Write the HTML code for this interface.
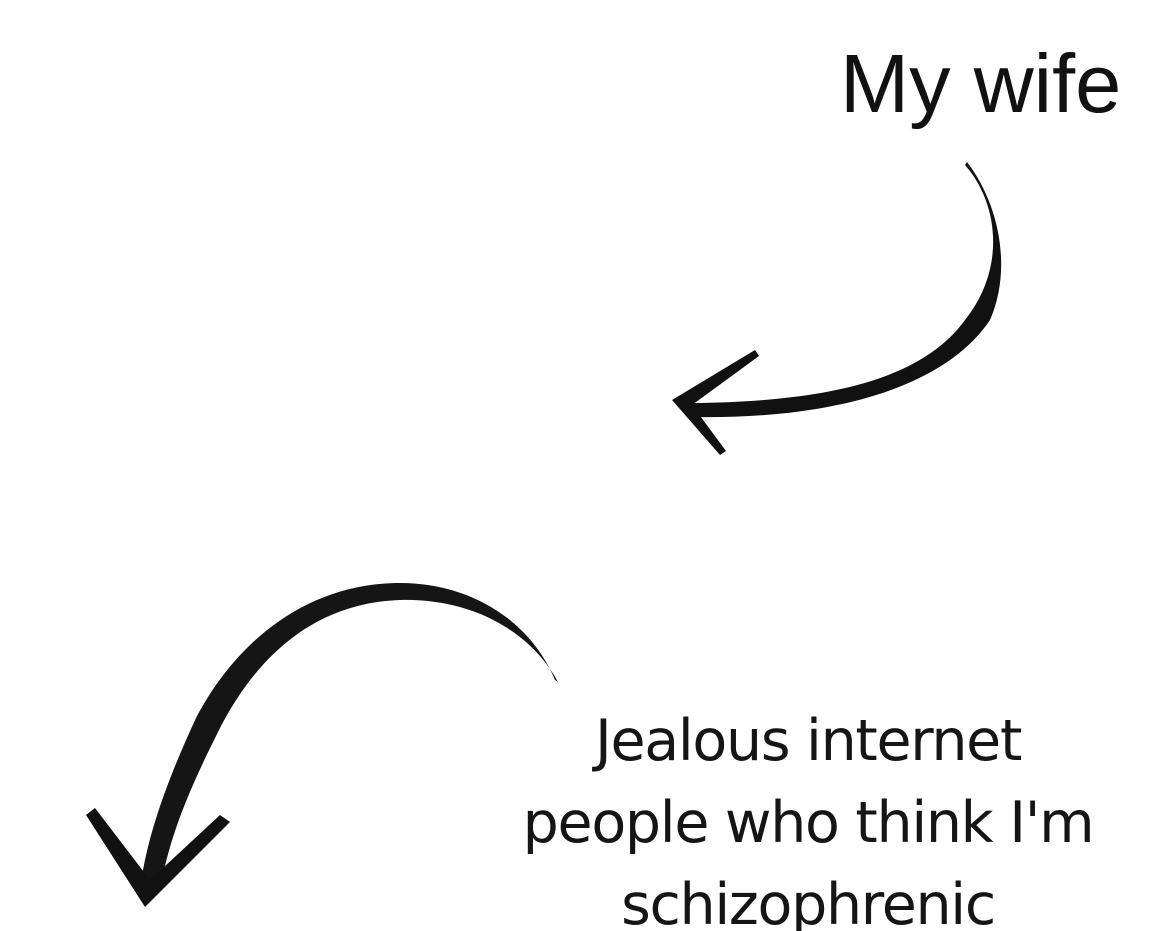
<!DOCTYPE html>
<html><head><meta charset="utf-8"><style>
html,body{margin:0;padding:0;background:#fff;width:1170px;height:931px;overflow:hidden;position:relative}
.t1{position:absolute;left:840px;top:36px;font:83px "Liberation Sans",sans-serif;color:#111;white-space:nowrap;letter-spacing:0px}
.t2{position:absolute;left:460px;top:700px;width:696px;text-align:center;font:57px/82px "DejaVu Sans","Liberation Sans",sans-serif;color:#151515;letter-spacing:-1.3px}
svg{position:absolute;left:0;top:0}
</style></head><body>
<svg width="1170" height="931" viewBox="0 0 1170 931">
<path d="M965 165 C1000 205 1005 270 965 320 C925 375 840 402 690 403 L690 417 C850 420 950 380 990 320 C1012 270 1000 205 967 162 Z" fill="#111"/>
<path d="M755 350 L672 400 L720 455 L726 451 L692 405 L759 356 Z" fill="#111"/>
<path d="M555 680 C530 620 470 583 400 583 C310 583 238 638 196 718 C165 785 146 840 140 890 L160 892 C168 840 188 792 218 732 C258 652 318 603 400 600 C470 598 530 630 558 682 Z" fill="#151515"/>
<path d="M86 815 L145 907 L230 822 L220 815 L150 880 L95 808 Z" fill="#111"/>
</svg>
<div class="t1">My wife</div>
<div class="t2">Jealous internet<br>people who think I'm<br>schizophrenic</div>
</body></html>
